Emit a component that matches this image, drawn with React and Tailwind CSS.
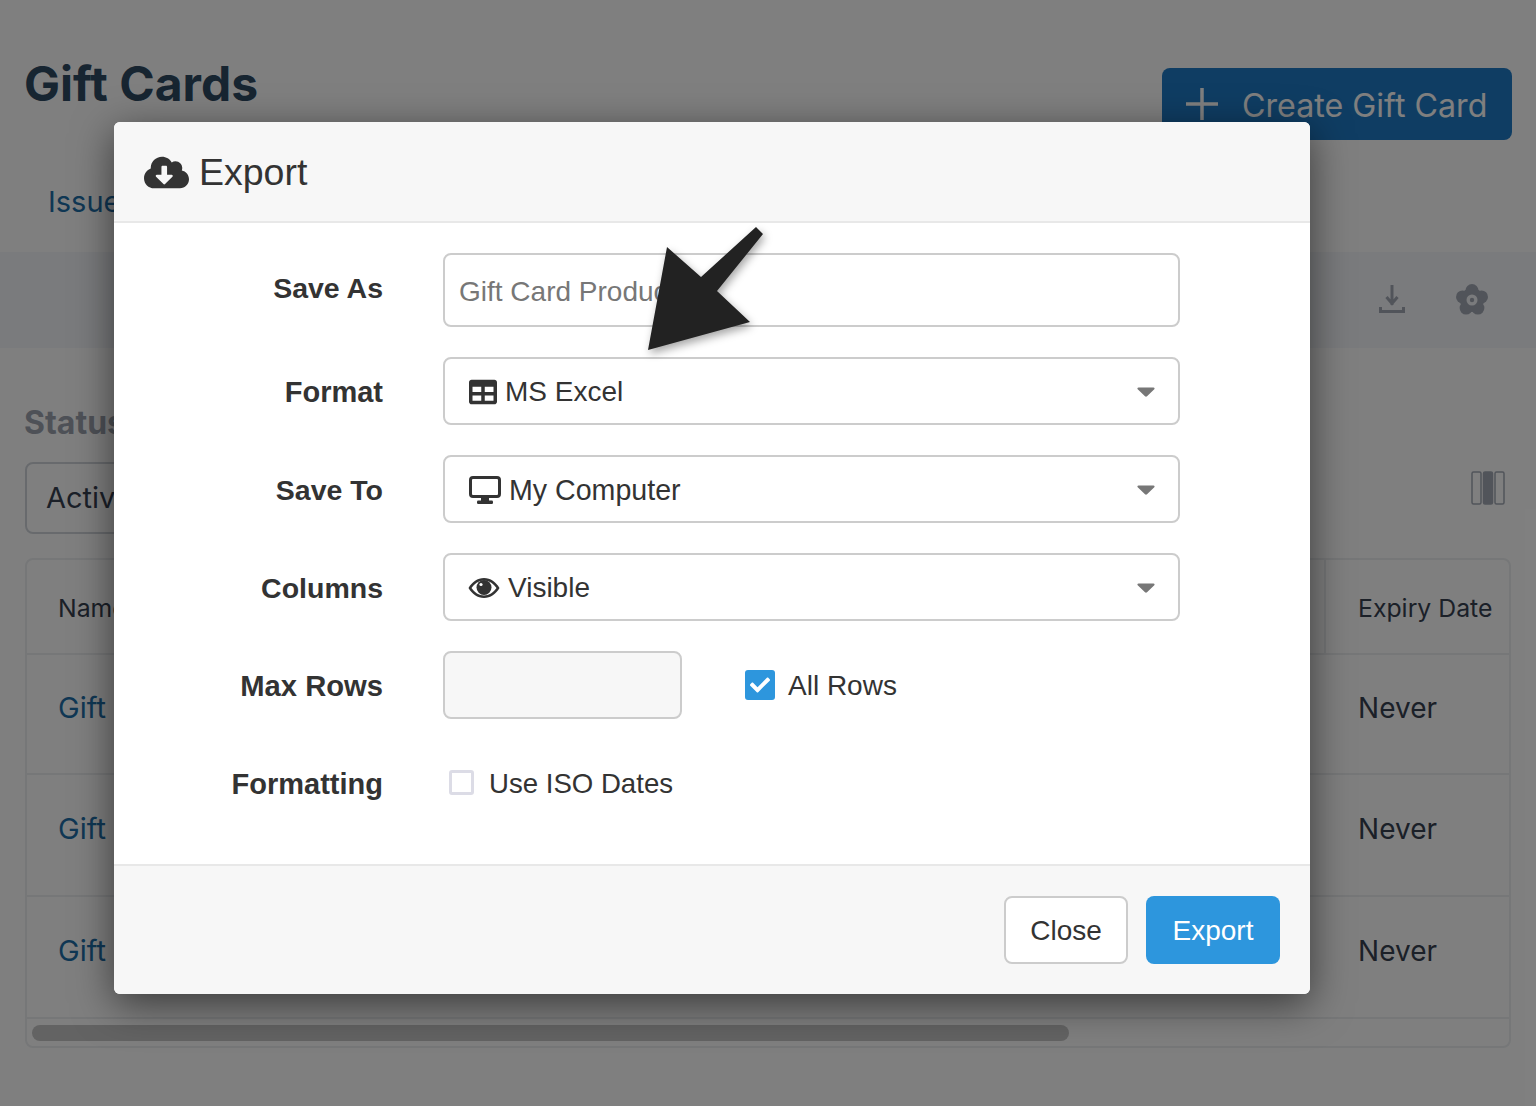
import React from "react";
import { FaCloudDownloadAlt, FaTable, FaCheck } from "react-icons/fa";

const Caret = () => (
  <svg width="18" height="10" viewBox="0 0 18 10" className="shrink-0"><path d="M1.5 0.5h15c1 0 1.4 1 .8 1.7L10 9.3c-.5.6-1.5.6-2 0L.7 2.2C.1 1.5.5.5 1.5.5z" fill="#777" /></svg>
);

const Label = ({ children, className }) => (
  <div className={`w-[269px] shrink-0 text-right font-bold text-[#333] ${className}`}>{children}</div>
);

const SelectBox = ({ icon, children, size }) => (
  <div className={`flex h-[68px] w-[737px] items-center rounded-lg border-2 border-[#ccc] bg-white pl-6 pr-[23px] pt-[2px] text-[#333] ${size}`}>
    {icon}
    <span className="flex-1">{children}</span>
    <Caret />
  </div>
);

const Row = ({ name, tall }) => (
  <div className={`flex items-center justify-between border-b-2 border-[#eceef0] pb-[12px] pl-[31px] pr-[72px] ${tall ? "h-[122px]" : "h-[120px]"}`}>
    <span className="text-[29px] text-[#1e6ea8]">{name}</span>
    <span className="text-[28px] text-[#374151]">Never</span>
  </div>
);

const DesktopIcon = () => (
  <svg width="32" height="28" viewBox="0 0 32 28" className="mr-[8px] shrink-0" fill="#333">
    <rect x="1.5" y="1.5" width="29" height="19" rx="2.5" fill="none" stroke="#333" strokeWidth="3" />
    <rect x="12" y="21" width="8" height="4" />
    <rect x="8" y="24.5" width="16" height="3.5" rx="1.2" />
  </svg>
);

const EyeIcon = () => (
  <svg width="32" height="20" viewBox="0 0 32 20" className="ml-[-1px] mr-[8px] shrink-0">
    <path fillRule="evenodd" fill="#333" d="M.5 10C4 4 9.5 0 16 0s12 4 15.5 10C28 16 22.5 20 16 20S4 16 .5 10zM3.5 10C6.5 14.5 11 17.5 16 17.5S25.5 14.5 28.5 10C25.5 5.5 21 2.5 16 2.5S6.5 5.500 3.500 10z" />
    <circle cx="16" cy="9.5" r="7.5" fill="#333" />
    <circle cx="13" cy="6.5" r="1.6" fill="#fff" />
  </svg>
);

export default function App() {
  return (
    <div className="relative h-[1106px] w-full overflow-hidden bg-white font-['Inter',sans-serif]">
      <div className="flex h-[252px] flex-col px-[25px]">
        <div className="flex items-start justify-between pt-[68px]">
          <h1 className="ml-[-1px] mt-[-12px] text-[48px] font-bold leading-[56px] text-[#2f4a63]">Gift Cards</h1>
          <button className="mr-[-1px] flex h-[72px] w-[350px] items-center gap-[23px] rounded-lg bg-[#1e7ac6] pl-[23px] text-[32.2px] text-white">
            <svg width="34" height="34" viewBox="0 0 34 34"><path d="M17 1v32M1 17h32" stroke="#fff" strokeWidth="3.5" /></svg>
            <span className="pt-[4px]">Create Gift Card</span>
          </button>
        </div>
        <div className="mt-[44px] pl-[23px] text-[29px] leading-[36px] text-[#1e6ea8]">Issued</div>
      </div>
      <div className="flex h-[96px] items-center justify-end gap-[44px] bg-[#f4f6fa] pr-[46px]">
        <svg width="36" height="36" viewBox="0 0 36 36" fill="none" stroke="#a3a9b5" strokeWidth="3"><path d="M18 3v20M12.5 15l5.5 6.5 5.5-6.5" /><path d="M6.5 25v4.5h23V25" strokeWidth="3" /></svg>
        <svg width="36" height="36" viewBox="0 0 36 36">
          <g fill="#a3a9b5">
            <circle cx="18" cy="8.5" r="6.5" /><circle cx="27.5" cy="14.9" r="6.5" /><circle cx="23.9" cy="26.1" r="6.5" /><circle cx="12.1" cy="26.1" r="6.5" /><circle cx="8.5" cy="14.9" r="6.5" /><circle cx="18" cy="18" r="12" />
          </g>
          <circle cx="18" cy="18" r="5.5" fill="#f4f6fa" />
          <circle cx="18" cy="18" r="2.2" fill="#a3a9b5" />
        </svg>
      </div>
      <div className="px-[25px]">
        <div className="ml-[-1px] mt-[56px] text-[32px] font-bold leading-[38px] text-[#9ca3af]">Status</div>
        <div className="mt-[20px] flex items-start justify-between">
          <div className="flex h-[72px] w-[300px] items-center rounded-lg border-2 border-[#d1d5db] pl-[19px] text-[29px] text-[#374151]">Active</div>
          <svg width="36" height="36" viewBox="0 0 36 36" className="mr-[5px] mt-[8px]" fill="none" stroke="#a3a9b5" strokeWidth="1.5">
            <rect x="2" y="2" width="9" height="32" rx="1.5" /><rect x="13.5" y="2" width="9" height="32" rx="1.5" fill="#a3a9b5" /><rect x="25" y="2" width="9" height="32" rx="1.5" />
          </svg>
        </div>
        <div className="mt-[24px] h-[490px] rounded-lg border-2 border-[#eceef0]">
          <div className="flex h-[95px] items-center justify-between border-b-2 border-[#eceef0] pl-[31px] text-[24.8px] text-[#374151]">
            <span className="pt-[4px]">Name</span>
            <div className="flex h-full w-[185px] items-center border-l-2 border-[#eceef0] pl-[32px] pt-[4px]">Expiry Date</div>
          </div>
          <Row name="Gift Card" />
          <Row name="Gift Card" tall />
          <Row name="Gift Card" tall />
          <div className="px-[5px] pt-[6px]">
            <div className="h-[16px] w-[1037px] rounded-full bg-[#c6c6c6]" />
          </div>
        </div>
      </div>

      <div className="absolute inset-0 bg-black/50" />

      <div className="absolute left-[114px] top-[122px] flex h-[872px] w-[1196px] flex-col rounded-md bg-white font-['Liberation_Sans',sans-serif] shadow-[0_10px_40px_rgba(0,0,0,0.55)]">
        <div className="flex h-[101px] items-center gap-[10px] rounded-t-md border-b-2 border-[#e8e8e8] bg-[#f7f7f7] pl-[30px] pt-[2px] text-[37.5px] text-[#333]">
          <FaCloudDownloadAlt size={45} className="text-[#333]" />
          Export
        </div>
        <div className="flex flex-1 flex-col gap-[30px] pt-[30px]">
          <div className="flex items-center gap-[60px]">
            <Label className="pb-[4px] text-[28.5px]">Save As</Label>
            <input readOnly placeholder="Gift Card Products" className="h-[74px] w-[737px] rounded-lg border-2 border-[#ccc] bg-white pl-[14px] pt-[4px] text-[28px] text-[#333] placeholder:text-[#777] outline-none" />
          </div>
          <div className="flex items-center gap-[60px]">
            <Label className="pt-[4px] text-[29px]">Format</Label>
            <SelectBox size="text-[28px]" icon={<FaTable size={28} className="mr-[8px] text-[#333]" />}>MS Excel</SelectBox>
          </div>
          <div className="flex items-center gap-[60px]">
            <Label className="pt-[2px] text-[28.5px]">Save To</Label>
            <SelectBox size="text-[28.6px]" icon={<DesktopIcon />}>My Computer</SelectBox>
          </div>
          <div className="flex items-center gap-[60px]">
            <Label className="pt-[2px] text-[28.5px]">Columns</Label>
            <SelectBox size="text-[28px]" icon={<EyeIcon />}>Visible</SelectBox>
          </div>
          <div className="flex items-center gap-[60px]">
            <Label className="pt-[4px] text-[29.2px]">Max Rows</Label>
            <div className="flex items-center gap-[63px]">
              <div className="h-[68px] w-[239px] rounded-lg border-2 border-[#ccc] bg-[#f7f7f7]" />
              <div className="flex items-center gap-[13px] text-[28px] text-[#333]">
                <span className="flex h-[30px] w-[30px] items-center justify-center rounded-[3px] bg-[#2d96dd]"><FaCheck size={20} className="text-white" /></span>
                <span className="pt-[2px]">All Rows</span>
              </div>
            </div>
          </div>
          <div className="flex h-[68px] items-center gap-[60px]">
            <Label className="pt-[4px] text-[29px]">Formatting</Label>
            <div className="flex items-center gap-[15px] pl-[6px] text-[27.6px] text-[#333]">
              <span className="h-[25px] w-[25px] rounded-[3px] border-[3px] border-[#dcdce6] bg-white" />
              <span className="pt-[2px]">Use ISO Dates</span>
            </div>
          </div>
        </div>
        <div className="flex h-[130px] items-center justify-end gap-[18px] rounded-b-md border-t-2 border-[#e8e8e8] bg-[#f7f7f7] pr-[30px] text-[28px]">
          <button className="h-[68px] w-[124px] rounded-lg border-2 border-[#ccc] bg-white pt-[2px] text-[#333]">Close</button>
          <button className="h-[68px] w-[134px] rounded-lg bg-[#2d96dd] pt-[2px] text-white">Export</button>
        </div>
      </div>

      <svg className="absolute left-0 top-0 drop-shadow-[2px_4px_4px_rgba(0,0,0,0.35)]" width="1536" height="1106" viewBox="0 0 1536 1106">
        <polygon points="648,350 667,247 701,277 756,227 763,234 717,291 750,322" fill="#222" />
      </svg>
    </div>
  );
}
